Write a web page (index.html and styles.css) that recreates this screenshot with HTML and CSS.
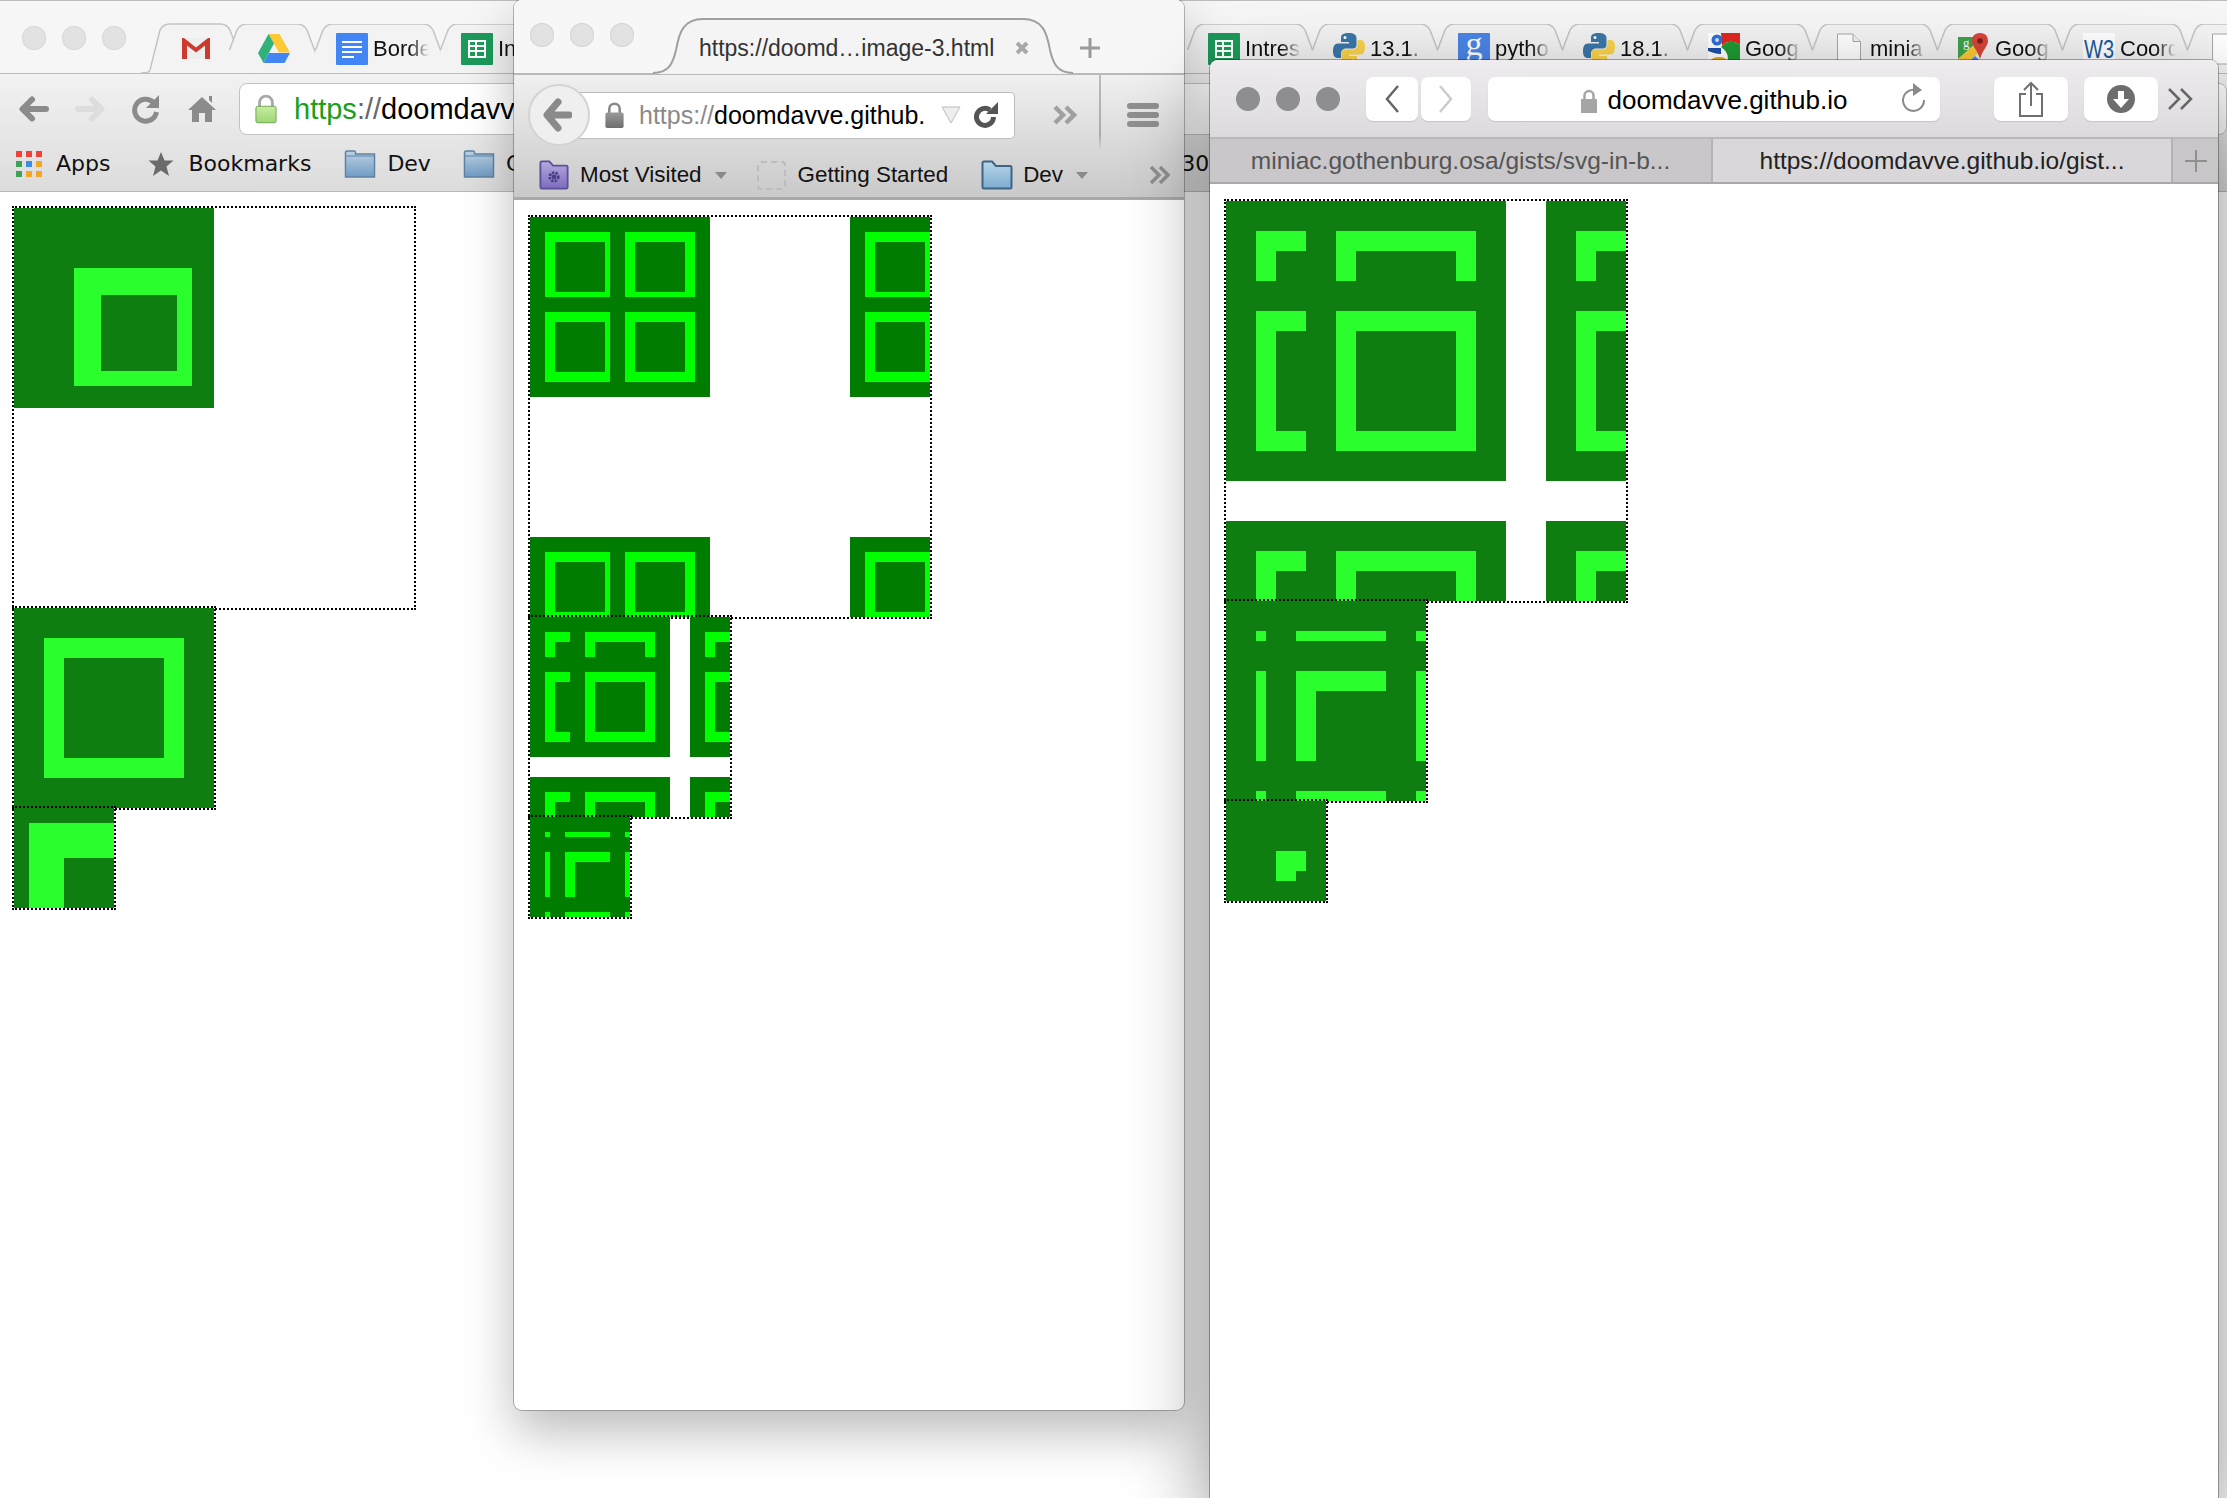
FILE: index.html
```html
<!DOCTYPE html>
<html>
<head>
    <title>Border image test in three browsers</title>
    <link rel="stylesheet" href="styles.css">
</head>
<body>
    <!-- shared shapes -->
    <svg class="defs" xmlns="http://www.w3.org/2000/svg">
        <defs>
            <linearGradient id="folder-grad" x1="0" y1="0" x2="0" y2="1"><stop offset="0" stop-color="#bdd3e6"/><stop offset="1" stop-color="#6f9bc2"/></linearGradient>
            <linearGradient id="folder-ff" x1="0" y1="0" x2="0" y2="1"><stop offset="0" stop-color="#b9d6ea"/><stop offset="1" stop-color="#7cabd0"/></linearGradient>
            <linearGradient id="purple-grad" x1="0" y1="0" x2="0" y2="1"><stop offset="0" stop-color="#b7a9e0"/><stop offset="1" stop-color="#7d6bbd"/></linearGradient>
            <linearGradient id="lock-grad" x1="0" y1="0" x2="0" y2="1"><stop offset="0" stop-color="#c9eda0"/><stop offset="1" stop-color="#9bd772"/></linearGradient>
            <linearGradient id="ff-lock" x1="0" y1="0" x2="0" y2="1"><stop offset="0" stop-color="#999"/><stop offset="1" stop-color="#6e6e6e"/></linearGradient>
        </defs>

        <symbol id="tab-pin" viewBox="0 0 100 49">
            <path class="tab-fill" d="M2.5 26L10 6C12 2 15 0 20 0H70C75 0 78 2 80 6L95 46C96 48 97 49 100 49H0Z"/>
            <path class="tab-line" d="M2.5 26L10 6C12 2 15 0 20 0H70C75 0 78 2 80 6L95 46C96 48 97 49 100 49"/>
        </symbol>
        <symbol id="tab-first" viewBox="0 0 100 49" overflow="visible">
            <path class="tab-fill" d="M-5 49C-2 49 -1 48 0 46L10 6C12 2 15 0 20 0H70C75 0 78 2 80 6L95 46C96 48 97 49 100 49Z"/>
            <path class="tab-line" d="M-9 49C-2 49 -1 48 0 46L10 6C12 2 15 0 20 0H70C75 0 78 2 80 6L95 46C96 48 97 49 100 49"/>
        </symbol>
        <symbol id="tab-wide" viewBox="0 0 140 49">
            <path class="tab-fill" d="M2.5 26L10 6C12 2 15 0 20 0H110C115 0 118 2 120 6L135 46C136 48 137 49 140 49H0Z"/>
            <path class="tab-line" d="M2.5 26L10 6C12 2 15 0 20 0H110C115 0 118 2 120 6L135 46C136 48 137 49 140 49"/>
        </symbol>

        <symbol id="ico-sheets" viewBox="0 0 32 32">
            <rect width="32" height="32" rx="1" fill="#1c9a5b"/>
            <path d="M7 7H25V25H7ZM9 9V12H14V9ZM16 9V12H23V9ZM9 14V17H14V14ZM16 14V17H23V14ZM9 19V23H14V19ZM16 19V23H23V19Z" fill="#fff" fill-rule="evenodd"/>
        </symbol>
        <symbol id="ico-python" viewBox="0 0 32 32">
            <path d="M15.500 0C9 0 8 2.500 8 5V9H16V10.500H5C1.500 10.500 0 13.500 0 18C0 22.500 1.500 25 5 25H8V20.500C8 17.500 10.500 15.500 13 15.500H20C22 15.500 23.500 14 23.500 12V5C23.500 2 21 0 15.500 0Z" fill="#3a77aa"/>
            <path d="M16.500 32C23 32 24 29.500 24 27V23H16V21.500H27C30.500 21.500 32 18.500 32 14C32 9.500 30.500 7 27 7H24.500V11.500C24.500 14.500 22 16.500 19.500 16.500H12C10 16.500 8.500 18 8.500 20V27C8.500 30 11 32 16.500 32Z" fill="#fbd44a"/>
            <circle cx="12" cy="4.500" r="1.500" fill="#fff"/>
            <circle cx="20" cy="27.500" r="1.500" fill="#fff"/>
        </symbol>
        <symbol id="ico-page" viewBox="0 0 32 32">
            <path d="M4.500 1H20L27.500 8.500V31H4.500Z" fill="#fff" stroke="#a8a8a8"/>
            <path d="M20 1V8.500H27.500" fill="#f0f0f0" stroke="#a8a8a8"/>
        </symbol>
        <symbol id="ico-google" viewBox="0 0 32 32">
            <rect width="32" height="32" fill="#fff"/>
            <path d="M13 0H32V12C26 7 18 8 14 13Z" fill="#e0281f"/>
            <path d="M32 12V32H14C22 30 22 20 13 14C18 8 26 7 32 12Z" fill="#1f9a34"/>
            <circle cx="9" cy="7" r="5.500" fill="#2f6fd6"/>
            <circle cx="9" cy="7" r="2" fill="#cfe0ff"/>
            <path d="M0 15H13V21C8 21 4 19 0 18Z" fill="#1d4fa8"/>
            <ellipse cx="11" cy="29" rx="9" ry="5" fill="#e0ad12"/>
        </symbol>
        <symbol id="ico-maps" viewBox="0 0 32 32">
            <rect x="0" y="4" width="22" height="28" fill="#e8e8e8"/>
            <path d="M0 4H16V12L0 26Z" fill="#3ea34a"/>
            <path d="M0 32V26L16 12L22 18L8 32Z" fill="#fcc934"/>
            <path d="M8 32L17 23L26 32Z" fill="#4a86ea"/>
            <path d="M22 0C16 0 14 4 14 8C14 13 19 16 22 26C25 16 30 13 30 8C30 4 28 0 22 0Z" fill="#d8443a"/>
            <circle cx="22" cy="8" r="2.800" fill="#7e1d16"/>
            <text x="5" y="14" class="map-letter">g</text>
        </symbol>
        <symbol id="ico-folder" viewBox="0 0 32 28">
            <path d="M1.500 6V2.500C1.500 1.500 2 1 3 1H10C11 1 11.500 1.500 11.500 2.500V4H30.500V27H1.500Z" fill="url(#folder-grad)" stroke="#5f82a3" stroke-width="1.500"/>
            <path d="M1.500 6H30.500" stroke="#5f82a3" stroke-width="1"/>
        </symbol>
        <symbol id="ico-folder-ff" viewBox="0 0 32 30">
            <path d="M1.500 27V3C1.500 2 2 1.500 3 1.500H11L15 6H29C30 6 30.500 6.500 30.500 7.500V27C30.500 28 30 28.500 29 28.500H3C2 28.500 1.500 28 1.500 27Z" fill="url(#folder-ff)" stroke="#3d6585" stroke-width="2"/>
        </symbol>

        <symbol id="tile-180" viewBox="0 0 180 180">
            <rect class="t-dark" width="180" height="180"/>
            <path class="t-bright" fill-rule="evenodd" d="M15 15H80V80H15ZM25 25V75H75V25ZM95 15H165V80H95ZM105 25V75H155V25ZM15 95H80V165H15ZM25 105V155H75V105ZM95 95H165V165H95ZM105 105V155H155V105Z"/>
        </symbol>
        <symbol id="tile-140" viewBox="0 0 140 140">
            <rect class="t-dark" width="140" height="140"/>
            <path class="t-bright" fill-rule="evenodd" d="M15 15H40V25H25V40H15ZM55 15H125V40H115V25H65V40H55ZM15 55H40V65H25V115H40V125H15ZM55 55H125V125H55ZM65 65V115H115V65Z"/>
        </symbol>
        <symbol id="tile-100" viewBox="0 0 100 100">
            <rect class="t-dark" width="100" height="100"/>
            <path class="t-bright" d="M15 15H20V20H15ZM35 15H80V20H35ZM95 15H100V20H95ZM15 35H20V80H15ZM35 35H80V45H45V80H35ZM95 35H100V80H95ZM15 95H20V100H15ZM35 95H80V100H35ZM95 95H100V100H95Z"/>
        </symbol>
    </svg>

    <div class="desktop">

        <!-- back window -->
        <div class="window chrome-win">
            <div class="c-strip">
                <div class="lights c-lights"><span></span><span></span><span></span></div>
                <div class="pin">
                    <svg class="tab-shape-pin"><use href="#tab-first"/></svg>
                    <svg class="favicon-gmail" viewBox="0 0 28 21">
                        <rect width="28" height="21" fill="#eeeeee"/>
                        <path d="M0 0H2L14 9.500L26 0H28V21H23V7.500L14 14.500L5 7.500V21H0Z" fill="#cc3a2f"/>
                    </svg>
                </div>
                <div class="pin">
                    <svg class="tab-shape-pin"><use href="#tab-pin"/></svg>
                    <svg class="favicon-drive" viewBox="0 0 32 29">
                        <path d="M10.500 0H21.500L32 18.500H21Z" fill="#fcc934"/>
                        <path d="M10.500 0L16 9.500L5.500 29L0 19Z" fill="#2fb37a"/>
                        <path d="M11 19H32L26.500 29H5.500Z" fill="#4285f4"/>
                    </svg>
                </div>
                <div class="tab tab-docs">
                    <svg class="tab-shape"><use href="#tab-wide"/></svg>
                    <svg class="favicon" viewBox="0 0 32 32">
                        <rect width="32" height="32" rx="1" fill="#4285f4"/>
                        <path d="M6 8H26V10H6ZM6 13H26V15H6ZM6 18H26V20H6ZM6 23H18V25H6Z" fill="#fff"/>
                    </svg>
                    <span class="tab-label">Borde</span>
                </div>
                <div class="tab">
                    <svg class="tab-shape"><use href="#tab-wide"/></svg>
                    <svg class="favicon"><use href="#ico-sheets"/></svg>
                    <span class="tab-label">In</span>
                </div>
                <div class="tab-gap"></div>
                <div class="tab">
                    <svg class="tab-shape"><use href="#tab-wide"/></svg>
                    <svg class="favicon"><use href="#ico-sheets"/></svg>
                    <span class="tab-label">Intres</span>
                </div>
                <div class="tab">
                    <svg class="tab-shape"><use href="#tab-wide"/></svg>
                    <svg class="favicon"><use href="#ico-python"/></svg>
                    <span class="tab-label">13.1.</span>
                </div>
                <div class="tab">
                    <svg class="tab-shape"><use href="#tab-wide"/></svg>
                    <svg class="favicon" viewBox="0 0 32 32">
                        <rect width="32" height="32" rx="1" fill="#4a86e8"/>
                        <text x="16" y="22" class="g-letter">g</text>
                    </svg>
                    <span class="tab-label">pytho</span>
                </div>
                <div class="tab">
                    <svg class="tab-shape"><use href="#tab-wide"/></svg>
                    <svg class="favicon"><use href="#ico-python"/></svg>
                    <span class="tab-label">18.1.</span>
                </div>
                <div class="tab">
                    <svg class="tab-shape"><use href="#tab-wide"/></svg>
                    <svg class="favicon"><use href="#ico-google"/></svg>
                    <span class="tab-label">Goog</span>
                </div>
                <div class="tab">
                    <svg class="tab-shape"><use href="#tab-wide"/></svg>
                    <svg class="favicon"><use href="#ico-page"/></svg>
                    <span class="tab-label">minia</span>
                </div>
                <div class="tab">
                    <svg class="tab-shape"><use href="#tab-wide"/></svg>
                    <svg class="favicon"><use href="#ico-maps"/></svg>
                    <span class="tab-label">Goog</span>
                </div>
                <div class="tab">
                    <svg class="tab-shape"><use href="#tab-wide"/></svg>
                    <svg class="favicon" viewBox="0 0 32 32">
                        <rect width="32" height="32" fill="#fff"/>
                        <text x="1" y="25" class="w3-letter" textLength="30" lengthAdjust="spacingAndGlyphs">W3</text>
                    </svg>
                    <span class="tab-label">Coord</span>
                </div>
                <div class="tab">
                    <svg class="tab-shape"><use href="#tab-wide"/></svg>
                    <svg class="favicon"><use href="#ico-page"/></svg>
                </div>
            </div>

            <div class="c-bars">
                <div class="c-nav">
                    <svg class="c-icon c-on" viewBox="0 0 32 32"><path d="M28 16H5M14 6.500L4.500 16L14 25.500" fill="none" stroke="currentColor" stroke-width="6" stroke-linecap="round" stroke-linejoin="round"/></svg>
                    <svg class="c-icon c-off" viewBox="0 0 32 32"><path d="M4 16H27M18 6.500L27.500 16L18 25.500" fill="none" stroke="currentColor" stroke-width="6" stroke-linecap="round" stroke-linejoin="round"/></svg>
                    <svg class="c-icon c-on" viewBox="0 0 32 32"><path d="M23.500 9.500A11 11 0 1 0 26.500 19" fill="none" stroke="currentColor" stroke-width="5"/><path d="M29 2V15H16Z" fill="currentColor"/></svg>
                    <svg class="c-icon c-on" viewBox="0 0 32 32"><path d="M16 4L30 17H26V29H19V20H13V29H6V17H2ZM23 3H26V10L23 7Z" fill="currentColor"/></svg>
                    <div class="c-field">
                        <svg class="c-lock" viewBox="0 0 24 32">
                            <path d="M5 14V9A7 7 0 0 1 19 9V14" fill="none" stroke="#a8a8a8" stroke-width="3"/>
                            <rect x="1" y="13" width="22" height="18" rx="2" fill="url(#lock-grad)" stroke="#6f9f55"/>
                        </svg>
                        <span class="c-url"><span class="c-scheme">https</span><span class="c-sep">://</span>doomdavv</span>
                    </div>
                </div>
                <div class="c-marks">
                    <svg class="c-apps" viewBox="0 0 26 26">
                        <path d="M0 0H6V6H0ZM10 0H16V6H10ZM20 0H26V6H20Z" fill="#f0403a"/>
                        <path d="M0 10H6V16H0Z" fill="#3da35a"/>
                        <path d="M10 10H16V16H10Z" fill="#3b8ee8"/>
                        <path d="M20 10H26V16H20Z" fill="#f5a623"/>
                        <path d="M0 20H6V26H0Z" fill="#3da35a"/>
                        <path d="M10 20H16V26H10ZM20 20H26V26H20Z" fill="#f5a623"/>
                    </svg>
                    <span class="c-mark m-apps">Apps</span>
                    <svg class="c-apps" viewBox="0 0 26 26"><path d="M13 1L16.500 9.500H25.500L18.500 15.500L21 25L13 19.500L5 25L7.500 15.500L0.500 9.500H9.500Z" fill="#6b6b6b"/></svg>
                    <span class="c-mark m-books">Bookmarks</span>
                    <svg class="c-folder"><use href="#ico-folder"/></svg>
                    <span class="c-mark m-dev">Dev</span>
                    <svg class="c-folder"><use href="#ico-folder"/></svg>
                    <span class="c-mark m-c">C</span>
                    <span class="c-mark m-far">308</span>
                </div>
            </div>

            <div class="page c-page">
                <div class="box">
                    <svg class="fill" width="400" height="400" viewBox="0 0 400 400">
                        <rect class="t-dark" width="200" height="200"/>
                        <path class="t-bright" fill-rule="evenodd" d="M60 60H178V178H60ZM87 87V163H163V87Z"/>
                    </svg>
                </div>
                <div class="box">
                    <svg class="fill" width="200" height="200" viewBox="0 0 200 200">
                        <rect class="t-dark" width="200" height="200"/>
                        <path class="t-bright" fill-rule="evenodd" d="M30 30H170V170H30ZM50 50V150H150V50Z"/>
                    </svg>
                </div>
                <div class="box">
                    <svg class="fill" width="100" height="100" viewBox="0 0 100 100">
                        <rect class="t-dark" width="100" height="100"/>
                        <path class="t-bright" d="M15 15H100V50H50V100H15Z"/>
                    </svg>
                </div>
            </div>
        </div>

        <!-- middle window -->
        <div class="window firefox-win">
            <div class="f-strip">
                <div class="lights f-lights"><span></span><span></span><span></span></div>
                <div class="f-tab">
                    <svg class="f-tab-shape" viewBox="0 0 420 56">
                        <path d="M0 55C16 55 20 45 23 32C26 15 30 1 50 1H370C390 1 394 15 397 32C400 45 404 55 420 55V56H0Z" fill="#f4f4f4"/>
                        <path d="M0 55C16 55 20 45 23 32C26 15 30 1 50 1H370C390 1 394 15 397 32C400 45 404 55 420 55" fill="none" stroke="#a0a0a0" stroke-width="2"/>
                    </svg>
                    <span class="f-title">https://doomd…image-3.html</span>
                    <svg class="f-close" viewBox="0 0 16 16"><path d="M3 3L13 13M13 3L3 13" stroke="#a8a8a8" stroke-width="4"/></svg>
                </div>
                <svg class="f-plus" viewBox="0 0 20 20"><path d="M10 0V20M0 10H20" stroke="#9a9a9a" stroke-width="3"/></svg>
            </div>

            <div class="f-bars">
                <div class="f-nav">
                    <div class="f-back">
                        <svg viewBox="0 0 30 36" width="30" height="36"><path d="M27 18H8M16 5L5 18L16 31" fill="none" stroke="#8a8a8a" stroke-width="7" stroke-linejoin="round" stroke-linecap="round"/></svg>
                    </div>
                    <div class="f-field">
                        <svg class="f-lock" viewBox="0 0 21 30">
                            <path d="M4.500 13V8A6 6 0 0 1 16.500 8V13" fill="none" stroke="#8a8a8a" stroke-width="3"/>
                            <rect y="12" width="21" height="18" rx="2" fill="url(#ff-lock)"/>
                        </svg>
                        <span class="f-url"><span class="f-scheme">https://</span>doomdavve.github.</span>
                        <svg class="f-drop" viewBox="0 0 20 18"><path d="M1 1H19L10 17Z" fill="#eee" stroke="#bdbdbd"/></svg>
                        <svg class="f-reload" viewBox="0 0 24 26"><path d="M16 8A8.500 8.500 0 1 0 19.500 15" fill="none" stroke="#555" stroke-width="5"/><path d="M24 0V12H12Z" fill="#555"/></svg>
                    </div>
                    <svg class="f-more" viewBox="0 0 24 20"><path d="M2 2L10 10L2 18M13 2L21 10L13 18" fill="none" stroke="#a0a0a0" stroke-width="4.500"/></svg>
                    <div class="f-divider"></div>
                    <div class="f-menu"><span></span><span></span><span></span></div>
                </div>
                <div class="f-marks">
                    <svg class="f-folder" viewBox="0 0 32 32">
                        <path d="M1.500 29V3C1.500 2 2 1.500 3 1.500H11L15 6H29C30 6 30.500 6.500 30.500 7.500V29C30.500 30 30 30.500 29 30.500H3C2 30.500 1.500 30 1.500 29Z" fill="url(#purple-grad)" stroke="#5d4f9a" stroke-width="2"/>
                        <circle cx="16" cy="18" r="4.500" fill="none" stroke="#4a3f86" stroke-width="3" stroke-dasharray="2.500 1.200"/>
                        <circle cx="16" cy="18" r="2.500" fill="#4a3f86"/>
                    </svg>
                    <span class="f-mark m-visited">Most Visited</span>
                    <span class="f-arrow"></span>
                    <span class="f-blank"></span>
                    <span class="f-mark m-start">Getting Started</span>
                    <svg class="f-folder-blue"><use href="#ico-folder-ff"/></svg>
                    <span class="f-mark m-fdev">Dev</span>
                    <span class="f-arrow"></span>
                    <svg class="f-more-marks" viewBox="0 0 24 20"><path d="M2 2L10 10L2 18M11 2L19 10L11 18" fill="none" stroke="#8f8f8f" stroke-width="3.500"/></svg>
                </div>
            </div>

            <div class="page f-page">
                <div class="box">
                    <svg class="fill" width="400" height="400" viewBox="0 0 400 400">
                        <use href="#tile-180" width="180" height="180"/>
                        <use href="#tile-180" x="320" width="180" height="180"/>
                        <use href="#tile-180" y="320" width="180" height="180"/>
                        <use href="#tile-180" x="320" y="320" width="180" height="180"/>
                    </svg>
                </div>
                <div class="box">
                    <svg class="fill" width="200" height="200" viewBox="0 0 200 200">
                        <use href="#tile-140" width="140" height="140"/>
                        <use href="#tile-140" x="160" width="140" height="140"/>
                        <use href="#tile-140" y="160" width="140" height="140"/>
                        <use href="#tile-140" x="160" y="160" width="140" height="140"/>
                    </svg>
                </div>
                <div class="box">
                    <svg class="fill" width="100" height="100" viewBox="0 0 100 100">
                        <use href="#tile-100" width="100" height="100"/>
                    </svg>
                </div>
            </div>
        </div>

        <!-- front window -->
        <div class="window safari-win">
            <div class="s-toolbar">
                <div class="lights s-lights"><span></span><span></span><span></span></div>
                <div class="s-btn s-back">
                    <svg viewBox="0 0 16 30" width="16" height="30"><path d="M14 2L3 15L14 28" fill="none" stroke="#666" stroke-width="2.500"/></svg>
                </div>
                <div class="s-btn s-fwd">
                    <svg viewBox="0 0 16 30" width="16" height="30"><path d="M2 2L13 15L2 28" fill="none" stroke="#ccc" stroke-width="2.500"/></svg>
                </div>
                <div class="s-field">
                    <span></span>
                    <div class="s-addr">
                        <svg class="s-lock" viewBox="0 0 16 24">
                            <path d="M3.500 11V6.500A4.500 4.500 0 0 1 12.500 6.500V11" fill="none" stroke="#a5a5a5" stroke-width="2.500"/>
                            <rect y="10" width="16" height="14" fill="#a5a5a5"/>
                        </svg>
                        <span>doomdavve.github.io</span>
                    </div>
                    <svg class="s-reload" viewBox="0 0 24 32"><path d="M15 7.500A10.500 10.500 0 1 0 22 17" fill="none" stroke="#8a8a8a" stroke-width="2"/><path d="M11 0L20 7L11 13Z" fill="#8a8a8a"/></svg>
                </div>
                <div class="s-btn s-share">
                    <svg viewBox="0 0 26 36" width="26" height="36"><path d="M8 13H2V35H24V13H18M13 25V2M6 9L13 2L20 9" fill="none" stroke="#707070" stroke-width="2"/></svg>
                </div>
                <div class="s-btn s-down">
                    <svg viewBox="0 0 28 28" width="28" height="28"><circle cx="14" cy="14" r="14" fill="#6d6d6d"/><path d="M11 6H17V14H22L14 23L6 14H11Z" fill="#fff"/></svg>
                </div>
                <svg class="s-more" viewBox="0 0 26 24"><path d="M2 2L12 12L2 22M14 2L24 12L14 22" fill="none" stroke="#666" stroke-width="2.500"/></svg>
            </div>
            <div class="s-tabs">
                <div class="s-tab s-tab-off">miniac.gothenburg.osa/gists/svg-in-b...</div>
                <div class="s-tab s-tab-on">https://doomdavve.github.io/gist...</div>
                <div class="s-tab-add">
                    <svg viewBox="0 0 22 22" width="22" height="22"><path d="M11 0V22M0 11H22" stroke="#8f8f8f" stroke-width="2"/></svg>
                </div>
            </div>
            <div class="page s-page">
                <div class="box">
                    <svg class="fill" width="400" height="400" viewBox="0 0 400 400">
                        <use href="#tile-140" width="280" height="280"/>
                        <use href="#tile-140" x="320" width="280" height="280"/>
                        <use href="#tile-140" y="320" width="280" height="280"/>
                        <use href="#tile-140" x="320" y="320" width="280" height="280"/>
                    </svg>
                </div>
                <div class="box">
                    <svg class="fill" width="200" height="200" viewBox="0 0 200 200">
                        <use href="#tile-100" width="200" height="200"/>
                    </svg>
                </div>
                <div class="box">
                    <svg class="fill" width="100" height="100" viewBox="0 0 100 100">
                        <rect class="t-dark" width="100" height="100"/>
                        <path class="t-bright" d="M50 50H80V70H70V80H50Z"/>
                    </svg>
                </div>
            </div>
        </div>

    </div>
</body>
</html>
```

FILE: styles.css
```css
body {
    margin: 0;
    background-color: white;
    font-family: "Liberation Sans", Arial, sans-serif;
}
.defs {
    position: absolute;
    width: 0;
    height: 0;
}
.desktop {
    position: relative;
    width: 2227px;
    height: 1498px;
    overflow: hidden;
}
.window {
    position: absolute;
    display: flex;
    flex-direction: column;
    box-sizing: border-box;
    background-color: white;
    overflow: hidden;
}
.chrome-win {
    left: 0;
    top: 0;
    width: 2227px;
    height: 1498px;
}
.firefox-win {
    left: 514px;
    top: 0;
    width: 670px;
    height: 1410px;
    border-radius: 8px;
    overflow: visible;
    box-shadow: 0 22px 50px rgba(0, 0, 0, 0.27), 0 0 0 1px rgba(0, 0, 0, 0.25);
}
.safari-win {
    left: 1210px;
    top: 60px;
    width: 1008px;
    height: 1438px;
    border-radius: 8px 8px 0 0;
    overflow: visible;
    box-shadow: 0 30px 80px rgba(0, 0, 0, 0.45), 0 0 0 1px rgba(0, 0, 0, 0.3);
}

/* traffic lights */
.lights {
    display: flex;
    gap: 16px;
}
.lights span {
    width: 24px;
    height: 24px;
    border-radius: 50%;
}

/* test boxes */
.page {
    display: flex;
    flex-direction: column;
    align-items: flex-start;
}
.box {
    position: relative;
    border: 2px dotted black;
    margin-bottom: -4px;
}
.fill {
    display: block;
}
.c-page, .s-page {
    --dark: #0f7e10;
    --bright: #2aff2d;
}
.f-page {
    --dark: #007c00;
    --bright: #00ff00;
}
.t-dark {
    fill: var(--dark);
}
.t-bright {
    fill: var(--bright);
}
.c-page {
    padding: 14px 12px;
}
.f-page {
    padding: 15px 14px;
}
.s-page {
    padding: 15px 14px;
}

/* chrome */
.c-strip {
    display: flex;
    align-items: flex-end;
    flex: none;
    box-sizing: border-box;
    height: 74px;
    padding-left: 22px;
    background-color: #f6f6f6;
    border-top: 1px solid #bdbdbd;
    border-bottom: 1px solid #bcbcbc;
    overflow: hidden;
}
.c-lights {
    align-self: flex-start;
    margin-top: 25px;
    margin-right: 24px;
}
.c-lights span {
    background-color: #e2e2e2;
    box-shadow: inset 0 0 0 1px #d8d8d8;
}
.tab-fill {
    fill: #f3f3f3;
}
.tab-line {
    fill: none;
    stroke: #c4c4c4;
    stroke-width: 1.5;
}
.pin, .tab {
    position: relative;
    display: flex;
    align-items: center;
    flex: none;
    height: 49px;
}
.pin {
    width: 77px;
}
.tab {
    width: 125px;
    padding-left: 23px;
    box-sizing: border-box;
}
.tab-docs {
    margin-left: 9px;
}
.tab-gap {
    flex: none;
    width: 622px;
}
.tab-shape-pin {
    position: absolute;
    left: 0;
    top: 0;
    width: 100px;
    height: 49px;
    overflow: visible;
}
.tab-shape {
    position: absolute;
    left: 0;
    top: 0;
    width: 140px;
    height: 49px;
    overflow: visible;
}
.favicon, .favicon-gmail, .favicon-drive {
    position: relative;
    flex: none;
}
.favicon {
    width: 32px;
    height: 32px;
}
.favicon-gmail {
    width: 28px;
    height: 21px;
    margin-left: 32px;
}
.favicon-drive {
    width: 32px;
    height: 29px;
    margin-left: 31px;
}
.tab-label {
    position: relative;
    width: 56px;
    margin-left: 5px;
    font-size: 22px;
    color: #111;
    white-space: nowrap;
    overflow: hidden;
    -webkit-mask-image: linear-gradient(to right, #000 65%, transparent);
    mask-image: linear-gradient(to right, #000 65%, transparent);
}
.g-letter {
    font-family: "Liberation Serif", serif;
    font-size: 34px;
    fill: white;
    text-anchor: middle;
}
.map-letter {
    font-family: "Liberation Serif", serif;
    font-size: 13px;
    fill: white;
}
.w3-letter {
    font-family: "Liberation Sans", sans-serif;
    font-size: 26px;
    fill: #1c5a9c;
}
.c-bars {
    flex: none;
    background: linear-gradient(#f2f2f2, #dcdcdc);
    border-bottom: 1px solid #b9b9b9;
    height: 117px;
}
.c-nav {
    display: flex;
    align-items: center;
    gap: 24px;
    box-sizing: border-box;
    height: 62px;
    padding: 9px 0 1px 18px;
}
.c-icon {
    width: 32px;
    height: 32px;
    flex: none;
}
.c-on {
    color: #8b8b8b;
}
.c-off {
    color: #dddddd;
}
.c-field {
    display: flex;
    align-items: center;
    flex: 1;
    box-sizing: border-box;
    height: 52px;
    margin-left: -3px;
    padding-left: 15px;
    background-color: white;
    border: 1px solid #c2c2c2;
    border-radius: 8px;
}
.c-lock {
    width: 22px;
    height: 30px;
    flex: none;
}
.c-url {
    margin-left: 17px;
    font-size: 29px;
    color: black;
    white-space: nowrap;
}
.c-scheme {
    color: #18a018;
}
.c-sep {
    color: #666;
}
.c-marks {
    display: flex;
    align-items: center;
    height: 55px;
    padding-left: 16px;
    font-family: "DejaVu Sans", sans-serif;
    font-size: 22px;
    color: #111;
}
.c-apps {
    width: 26px;
    height: 26px;
    flex: none;
}
.c-folder {
    width: 32px;
    height: 28px;
    flex: none;
}
.c-mark {
    white-space: nowrap;
}
.m-apps, .m-books {
    margin-left: 14px;
}
.m-apps {
    margin-right: 38px;
}
.m-books {
    margin-right: 33px;
}
.m-dev {
    margin-left: 11px;
    margin-right: 32px;
}
.m-c {
    margin-left: 11px;
}
.m-far {
    margin-left: 660px;
}

/* firefox */
.f-strip {
    display: flex;
    align-items: flex-end;
    flex: none;
    box-sizing: border-box;
    height: 75px;
    padding-left: 16px;
    background-color: #f7f7f7;
    border-bottom: 2px solid #b8b8b8;
    border-radius: 8px 8px 0 0;
}
.f-lights {
    align-self: flex-start;
    margin-top: 23px;
    margin-right: 19px;
}
.f-lights span {
    background-color: #e2e2e2;
    box-shadow: inset 0 0 0 1px #d6d6d6;
}
.f-tab {
    position: relative;
    display: flex;
    align-items: center;
    width: 420px;
    height: 56px;
    margin-bottom: -1px;
    padding-top: 4px;
    box-sizing: border-box;
}
.f-tab-shape {
    position: absolute;
    left: 0;
    top: 0;
    width: 420px;
    height: 56px;
}
.f-title {
    position: relative;
    margin-left: 46px;
    width: 298px;
    font-size: 23px;
    color: #333;
    white-space: nowrap;
}
.f-close {
    position: relative;
    width: 16px;
    height: 16px;
    margin-left: 17px;
}
.f-plus {
    width: 20px;
    height: 20px;
    margin-left: 7px;
    margin-bottom: 15px;
}
.f-bars {
    flex: none;
    height: 125px;
    box-sizing: border-box;
    background: linear-gradient(#f0f0f0, #c9c9c9);
    border-bottom: 3px solid #a9a9a9;
}
.f-nav {
    display: flex;
    align-items: center;
    height: 80px;
    padding-left: 14px;
}
.f-back {
    position: relative;
    display: flex;
    align-items: center;
    justify-content: center;
    flex: none;
    box-sizing: border-box;
    width: 62px;
    height: 62px;
    padding-right: 5px;
    background-color: #efefef;
    border: 2px solid #d4d4d4;
    border-radius: 50%;
    z-index: 1;
}
.f-field {
    display: flex;
    align-items: center;
    flex: none;
    box-sizing: border-box;
    width: 438px;
    height: 45px;
    margin-left: -14px;
    padding: 0 16px 0 28px;
    background-color: white;
    border-radius: 4px;
    box-shadow: 0 0 0 1px #bdbdbd;
}
.f-lock {
    width: 21px;
    height: 26px;
    flex: none;
}
.f-url {
    flex: 1;
    margin-left: 14px;
    font-size: 25px;
    color: black;
    white-space: nowrap;
}
.f-scheme {
    color: #8a8a8a;
}
.f-drop {
    width: 20px;
    height: 18px;
    flex: none;
}
.f-reload {
    width: 24px;
    height: 26px;
    flex: none;
    margin-left: 13px;
}
.f-more {
    width: 24px;
    height: 20px;
    margin-left: 39px;
    flex: none;
}
.f-divider {
    align-self: stretch;
    width: 2px;
    margin: 0 26px 5px 22px;
    background: linear-gradient(#bbb, #aaa 80%, transparent);
}
.f-menu {
    display: flex;
    flex-direction: column;
    gap: 3px;
    width: 32px;
}
.f-menu span {
    height: 6px;
    border-radius: 3px;
    background-color: #8f8f8f;
}
.f-marks {
    display: flex;
    align-items: center;
    height: 40px;
    padding-left: 25px;
    font-size: 22.4px;
    color: #111;
}
.f-folder {
    width: 30px;
    height: 30px;
    flex: none;
}
.f-mark {
    white-space: nowrap;
}
.m-visited {
    margin-left: 11px;
}
.f-arrow {
    flex: none;
    margin-left: 13px;
    border-style: solid;
    border-width: 7px 6px 0;
    border-color: #8a8a8a transparent transparent;
}
.f-blank {
    flex: none;
    box-sizing: border-box;
    width: 29px;
    height: 29px;
    margin-left: 30px;
    border: 2px dashed #bdbdbd;
    border-radius: 4px;
}
.m-start {
    margin-left: 12px;
}
.f-folder-blue {
    width: 32px;
    height: 30px;
    flex: none;
    margin-left: 33px;
}
.m-fdev {
    margin-left: 10px;
}
.f-more-marks {
    width: 24px;
    height: 20px;
    flex: none;
    margin-left: auto;
    margin-right: 11px;
}

/* safari */
.s-toolbar {
    display: flex;
    align-items: center;
    flex: none;
    box-sizing: border-box;
    height: 77px;
    padding-left: 26px;
    background: linear-gradient(#eeecee, #dcdadc);
    border-radius: 8px 8px 0 0;
}
.s-lights {
    margin-right: 26px;
}
.s-lights span {
    background-color: #8e8d8f;
}
.s-btn {
    display: flex;
    align-items: center;
    justify-content: center;
    flex: none;
    height: 44px;
    background-color: white;
    border-radius: 7px;
    box-shadow: 0 1px 1px rgba(0, 0, 0, 0.12);
}
.s-back {
    width: 52px;
}
.s-fwd {
    width: 50px;
    margin-left: 3px;
}
.s-field {
    display: grid;
    grid-template-columns: 1fr auto 1fr;
    align-items: center;
    flex: none;
    box-sizing: border-box;
    width: 452px;
    height: 44px;
    margin-left: 17px;
    padding: 0 14px;
    background-color: white;
    border-radius: 7px;
    box-shadow: 0 1px 1px rgba(0, 0, 0, 0.12);
}
.s-addr {
    display: flex;
    align-items: center;
    gap: 11px;
    padding-top: 4px;
    font-size: 26px;
    color: black;
    white-space: nowrap;
}
.s-lock {
    width: 16px;
    height: 24px;
}
.s-reload {
    width: 24px;
    height: 32px;
    justify-self: end;
}
.s-share {
    width: 74px;
    margin-left: 54px;
}
.s-down {
    width: 74px;
    margin-left: 16px;
}
.s-more {
    width: 26px;
    height: 24px;
    margin-left: 9px;
}
.s-tabs {
    display: flex;
    flex: none;
    box-sizing: border-box;
    height: 47px;
    font-size: 24.5px;
    border-top: 2px solid #b9b7b9;
    border-bottom: 2px solid #a9a9a9;
}
.s-tab {
    display: flex;
    align-items: center;
    justify-content: center;
    white-space: nowrap;
}
.s-tab-off {
    width: 503px;
    background-color: #c9c7c9;
    color: #555;
    border-right: 2px solid #b4b2b4;
    box-sizing: border-box;
}
.s-tab-on {
    width: 458px;
    background-color: #d9d7d9;
    color: #222;
}
.s-tab-add {
    display: flex;
    align-items: center;
    justify-content: center;
    flex: 1;
    background-color: #c8c6c8;
    border-left: 2px solid #b4b2b4;
}
```
